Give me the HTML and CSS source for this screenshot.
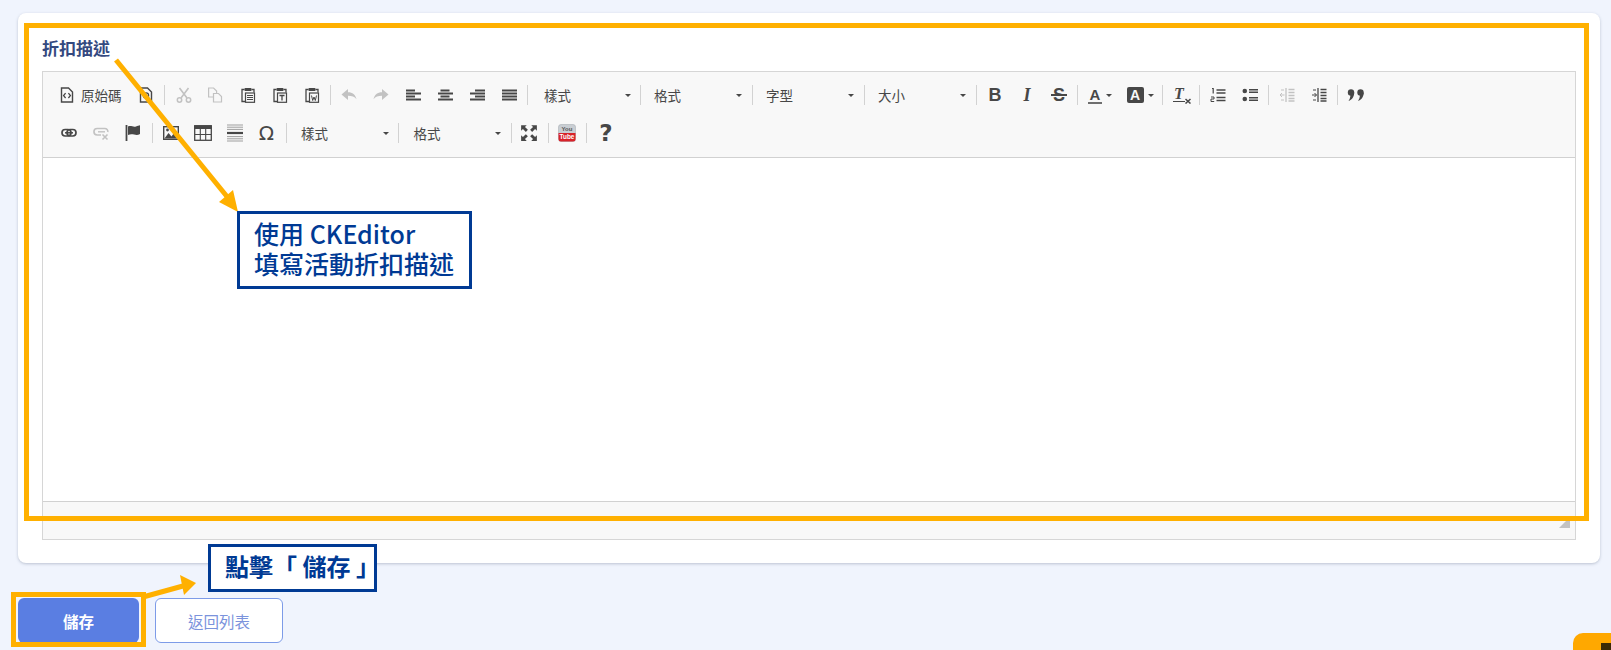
FILE: index.html
```html
<!DOCTYPE html>
<html lang="zh-Hant">
<head>
<meta charset="utf-8">
<title>折扣描述</title>
<link rel="stylesheet" href="styles.css">
</head>
<body>
<svg class="sprite" xmlns="http://www.w3.org/2000/svg">
  <symbol id="i-source" viewBox="0 0 16 16"><path d="M2.500 1h7L13.500 5v10h-11z" fill="none" stroke="currentColor" stroke-width="1.400"/><path d="M6.600 6.200 4.600 8.600l2 2.400M9.400 6.200l2 2.400-2 2.400" fill="none" stroke="currentColor" stroke-width="1.300"/></symbol>
  <symbol id="i-preview" viewBox="0 0 16 16"><path d="M2.500 1h7L13.500 5v10h-11z" fill="none" stroke="currentColor" stroke-width="1.400"/><circle cx="8" cy="8.500" r="2.600" fill="none" stroke="currentColor" stroke-width="1.300"/><path d="M10 10.500l3 3" stroke="currentColor" stroke-width="1.500"/></symbol>
  <symbol id="i-cut" viewBox="0 0 16 16"><circle cx="3.500" cy="13" r="2.200" fill="none" stroke="currentColor" stroke-width="1.500"/><circle cx="12.500" cy="13" r="2.200" fill="none" stroke="currentColor" stroke-width="1.500"/><path d="M5 11 12.500 1M11 11 3.500 1" stroke="currentColor" stroke-width="1.600"/></symbol>
  <symbol id="i-copy" viewBox="0 0 16 16"><path d="M.6 1h5l3 3v6h-8z" fill="none" stroke="currentColor" stroke-width="1.200"/><path d="M5.500 6.500h5l3 3v5.500h-8z" fill="#f8f8f8" stroke="currentColor" stroke-width="1.200"/></symbol>
  <symbol id="i-paste" viewBox="0 0 16 16"><path d="M4.500 2.500H2v12h3" fill="none" stroke="currentColor" stroke-width="1.300"/><path d="M11.500 2.500H14v3" fill="none" stroke="currentColor" stroke-width="1.300"/><rect x="4.500" y="1" width="7" height="3" rx=".8" fill="currentColor"/><rect x="5.500" y="6" width="9" height="9.300" fill="#f8f8f8" stroke="currentColor" stroke-width="1.200"/><path d="M7 8.500h6M7 10.500h6M7 12.500h6" stroke="currentColor" stroke-width="1.100"/></symbol>
  <symbol id="i-paste-t" viewBox="0 0 16 16"><path d="M4.500 2.500H2v12h3" fill="none" stroke="currentColor" stroke-width="1.300"/><path d="M11.500 2.500H14v3" fill="none" stroke="currentColor" stroke-width="1.300"/><rect x="4.500" y="1" width="7" height="3" rx=".8" fill="currentColor"/><rect x="5.500" y="6" width="9" height="9.300" fill="#f8f8f8" stroke="currentColor" stroke-width="1.200"/><path d="M7.500 8.500h5M10 8.500v5" stroke="currentColor" stroke-width="1.300"/></symbol>
  <symbol id="i-paste-w" viewBox="0 0 16 16"><path d="M4.500 2.500H2v12h3" fill="none" stroke="currentColor" stroke-width="1.300"/><path d="M11.500 2.500H14v3" fill="none" stroke="currentColor" stroke-width="1.300"/><rect x="4.500" y="1" width="7" height="3" rx=".8" fill="currentColor"/><rect x="5.500" y="6" width="9" height="9.300" fill="#f8f8f8" stroke="currentColor" stroke-width="1.200"/><path d="M7.500 8.500l1.200 5 1.300-3.500 1.300 3.500 1.200-5" fill="none" stroke="currentColor" stroke-width="1"/></symbol>
  <symbol id="i-undo" viewBox="0 0 16 16"><path d="M.5 7.500 7 2v3.300c4.500 0 7.500 2.500 8.500 7-2-2.600-4.500-3.500-8.500-3.500V13z" fill="currentColor"/></symbol>
  <symbol id="i-redo" viewBox="0 0 16 16"><path d="M15.500 7.500 9 2v3.300c-4.500 0-7.500 2.500-8.500 7 2-2.600 4.500-3.500 8.500-3.500V13z" fill="currentColor"/></symbol>
  <symbol id="i-al" viewBox="0 0 16 16"><path d="M1 3.500h9M1 6.500h15M1 9.500h9M1 12.500h15" stroke="currentColor" stroke-width="1.800"/></symbol>
  <symbol id="i-ac" viewBox="0 0 16 16"><path d="M3.500 3.500h9M1 6.500h15M3.500 9.500h9M1 12.500h15" stroke="currentColor" stroke-width="1.800"/></symbol>
  <symbol id="i-ar" viewBox="0 0 16 16"><path d="M6 3.500h10M1 6.500h15M6 9.500h10M1 12.500h15" stroke="currentColor" stroke-width="1.800"/></symbol>
  <symbol id="i-aj" viewBox="0 0 16 16"><path d="M1 3.500h15M1 6.500h15M1 9.500h15M1 12.500h15" stroke="currentColor" stroke-width="1.800"/></symbol>
  <symbol id="i-ol" viewBox="0 0 16 16"><path d="M6.500 3h9M6.500 6h9M6.500 10.500h9M6.500 13.500h9" stroke="currentColor" stroke-width="1.500"/><path d="M2 1.500h1.200v5" fill="none" stroke="currentColor" stroke-width="1.200"/><path d="M1 10h3v2H1v2.500h3.200" fill="none" stroke="currentColor" stroke-width="1"/></symbol>
  <symbol id="i-ul" viewBox="0 0 16 16"><circle cx="2.800" cy="4" r="2.300" fill="currentColor"/><circle cx="2.800" cy="12" r="2.300" fill="currentColor"/><path d="M7 2.800h9M7 5.300h9M7 10.800h9M7 13.300h9" stroke="currentColor" stroke-width="1.400"/></symbol>
  <symbol id="i-outdent" viewBox="0 0 16 16"><path d="M7 1v14" stroke="currentColor" stroke-width="1.300"/><path d="M9.500 2.500h6M9.500 5.500h6M9.500 8.500h6M9.500 11.500h6M9.500 14h6" stroke="currentColor" stroke-width="1.300"/><path d="M5.500 8H1M3 6 1 8l2 2M2 3h3M2 13h3" fill="none" stroke="currentColor" stroke-width="1"/></symbol>
  <symbol id="i-indent" viewBox="0 0 16 16"><path d="M7 1v14" stroke="currentColor" stroke-width="1.300"/><path d="M9.500 2.500h6M9.500 5.500h6M9.500 8.500h6M9.500 11.500h6M9.500 14h6" stroke="currentColor" stroke-width="1.300"/><path d="M1 8h4.500M3.500 6l2 2-2 2M2 3h3M2 13h3" fill="none" stroke="currentColor" stroke-width="1"/></symbol>
  <symbol id="i-quote" viewBox="0 0 18 16"><circle cx="4" cy="5.500" r="3.200" fill="currentColor"/><circle cx="13.500" cy="5.500" r="3.200" fill="currentColor"/><path d="M7.200 5.500C7.200 9.500 5 13 1.500 14c1-1.500 1.900-3.500 1.900-6M16.700 5.500c0 4-2.200 7.500-5.700 8.500 1-1.500 1.900-3.500 1.900-6" fill="currentColor"/></symbol>
  <symbol id="i-link" viewBox="0 0 16 16"><rect x="1" y="4.500" width="9" height="6.500" rx="3.200" fill="none" stroke="currentColor" stroke-width="1.700"/><rect x="6" y="4.500" width="9" height="6.500" rx="3.200" fill="none" stroke="currentColor" stroke-width="1.700"/><path d="M4 7.800h8" stroke="currentColor" stroke-width="1.500"/></symbol>
  <symbol id="i-unlink" viewBox="0 0 16 16"><path d="M8 10H4.200a3 3 0 0 1 0-6.500h7.600A3 3 0 0 1 14.800 7" fill="none" stroke="currentColor" stroke-width="1.600"/><path d="M5 6.800h7" stroke="currentColor" stroke-width="1.400"/><path d="M9.500 9.500l5 5M14.500 9.500l-5 5" stroke="currentColor" stroke-width="1.600"/></symbol>
  <symbol id="i-flag" viewBox="0 0 16 16"><path d="M1.500 0v16" stroke="currentColor" stroke-width="1.800"/><path d="M3 1.500c3-1.500 5 1 8 0 1.500-.4 3-1 4-1.200V9c-4 2.500-7-1-12 1z" fill="currentColor"/></symbol>
  <symbol id="i-image" viewBox="0 0 16 16"><rect x=".7" y="1.700" width="14.600" height="12.600" fill="none" stroke="currentColor" stroke-width="1.400"/><path d="M1.500 13.500 5.500 8l3 3.500 3.500-5 3 4v3z" fill="currentColor"/><circle cx="4.500" cy="5" r="1.400" fill="currentColor"/></symbol>
  <symbol id="i-table" viewBox="0 0 18 18"><rect x=".7" y="1.700" width="16.600" height="14.600" fill="none" stroke="currentColor" stroke-width="1.300"/><path d="M0 2h18v3H0z" fill="currentColor"/><path d="M6.300 5v11M11.700 5v11M1 10.500h16" stroke="currentColor" stroke-width="1.100"/></symbol>
  <symbol id="i-hr" viewBox="0 0 18 18"><path d="M1 1h16M1 3.200h16M1 5.400h16M1 12.600h16M1 14.800h16M1 17h16" stroke="currentColor" stroke-width="1" opacity=".5"/><path d="M1 9h16" stroke="currentColor" stroke-width="2.200"/></symbol>
  <symbol id="i-max" viewBox="0 0 16 16"><path d="M1 1h5L4.400 2.600 7 5.200 5.200 7 2.600 4.400 1 6zM15 1v5l-1.600-1.600L10.800 7 9 5.200l2.600-2.600L10 1zM1 15v-5l1.600 1.600L5.200 9 7 10.800l-2.600 2.600L6 15zM15 15h-5l1.600-1.600L9 10.800 10.800 9l2.600 2.600L15 10z" fill="currentColor"/></symbol>
  <symbol id="i-clear" viewBox="0 0 16 16"><path d="M10.500 11l5 4.500M15.500 11l-5 4.500" stroke="currentColor" stroke-width="1.500"/></symbol>
</svg>

<main class="page">
  <section class="card">
    <h2 class="field-label">折扣描述</h2>
    <div class="editor">
      <div class="toolbar">
        <div class="row">
          <button class="btn btn-source"><svg class="ic"><use href="#i-source"/></svg><span class="btn-text">原始碼</span></button>
          <button class="btn"><svg class="ic"><use href="#i-preview"/></svg></button>
          <i class="sep sep-first"></i>
          <button class="btn off"><svg class="ic"><use href="#i-cut"/></svg></button>
          <button class="btn off"><svg class="ic"><use href="#i-copy"/></svg></button>
          <button class="btn"><svg class="ic"><use href="#i-paste"/></svg></button>
          <button class="btn"><svg class="ic"><use href="#i-paste-t"/></svg></button>
          <button class="btn"><svg class="ic"><use href="#i-paste-w"/></svg></button>
          <i class="sep"></i>
          <button class="btn off"><svg class="ic"><use href="#i-undo"/></svg></button>
          <button class="btn off"><svg class="ic"><use href="#i-redo"/></svg></button>
          <button class="btn"><svg class="ic"><use href="#i-al"/></svg></button>
          <button class="btn"><svg class="ic"><use href="#i-ac"/></svg></button>
          <button class="btn"><svg class="ic"><use href="#i-ar"/></svg></button>
          <button class="btn"><svg class="ic"><use href="#i-aj"/></svg></button>
          <i class="sep"></i>
          <div class="combo combo-first"><span>樣式</span><b class="caret"></b></div>
          <i class="sep"></i>
          <div class="combo"><span>格式</span><b class="caret"></b></div>
          <i class="sep"></i>
          <div class="combo"><span>字型</span><b class="caret"></b></div>
          <i class="sep"></i>
          <div class="combo"><span>大小</span><b class="caret"></b></div>
          <i class="sep"></i>
          <button class="btn glyph glyph-b">B</button>
          <button class="btn glyph glyph-i">I</button>
          <button class="btn glyph glyph-s"><span class="strike">S</span></button>
          <i class="sep"></i>
          <button class="btn btn-color"><span class="glyph-a">A</span><b class="caret caret-sm"></b></button>
          <button class="btn btn-color"><span class="glyph-abg">A</span><b class="caret caret-sm"></b></button>
          <i class="sep"></i>
          <button class="btn"><span class="glyph-clear"><span class="glyph-clear-i">T</span><svg class="ic"><use href="#i-clear"/></svg></span></button>
          <i class="sep"></i>
          <button class="btn"><svg class="ic"><use href="#i-ol"/></svg></button>
          <button class="btn"><svg class="ic"><use href="#i-ul"/></svg></button>
          <i class="sep"></i>
          <button class="btn off"><svg class="ic"><use href="#i-outdent"/></svg></button>
          <button class="btn"><svg class="ic"><use href="#i-indent"/></svg></button>
          <i class="sep"></i>
          <button class="btn"><svg class="ic ic-lg"><use href="#i-quote"/></svg></button>
        </div>
        <div class="row row-second">
          <button class="btn"><svg class="ic"><use href="#i-link"/></svg></button>
          <button class="btn off"><svg class="ic"><use href="#i-unlink"/></svg></button>
          <button class="btn"><svg class="ic"><use href="#i-flag"/></svg></button>
          <i class="sep"></i>
          <button class="btn"><svg class="ic"><use href="#i-image"/></svg></button>
          <button class="btn"><svg class="ic ic-lg"><use href="#i-table"/></svg></button>
          <button class="btn"><svg class="ic ic-lg"><use href="#i-hr"/></svg></button>
          <button class="btn glyph glyph-omega">Ω</button>
          <i class="sep"></i>
          <div class="combo"><span>樣式</span><b class="caret"></b></div>
          <i class="sep"></i>
          <div class="combo"><span>格式</span><b class="caret"></b></div>
          <i class="sep"></i>
          <button class="btn"><svg class="ic ic-lg"><use href="#i-max"/></svg></button>
          <i class="sep"></i>
          <button class="btn">
            <svg class="ic ic-lg" viewBox="0 0 18 18">
              <rect x=".5" y=".5" width="17" height="17" rx="2.500" fill="#c9ced3" stroke="#aab0b5" stroke-width=".6"/>
              <path d="M.5 9h17v6a2.500 2.500 0 0 1-2.500 2.500H3A2.500 2.500 0 0 1 .5 15z" fill="#d8232a"/>
              <text x="9" y="7.200" class="yt-you">You</text>
              <text x="9" y="15" class="yt-tube">Tube</text>
            </svg>
          </button>
          <i class="sep"></i>
          <button class="btn glyph glyph-help">?</button>
        </div>
      </div>
      <div class="content"></div>
      <div class="statusbar"><b class="resizer"></b></div>
    </div>
  </section>
  <div class="actions">
    <button class="action action-save">儲存</button>
    <button class="action action-back">返回列表</button>
  </div>
</main>

<div class="mark mark-editor"></div>
<div class="mark mark-save"></div>
<svg class="arrows" viewBox="0 0 1611 650" xmlns="http://www.w3.org/2000/svg">
  <path d="M116 60 229 199" class="arrow-line"/>
  <path d="M238 212 219 202 233 190z" class="arrow-head"/>
  <path d="M143 597 183 586" class="arrow-line"/>
  <path d="M196 583 180 575 184 595z" class="arrow-head"/>
</svg>
<div class="callout callout-editor">使用 CKEditor<br>填寫活動折扣描述</div>
<div class="callout callout-save">點擊「 儲存 」</div>
<div class="chat-tab"><i class="chat-dot"></i></div>
</body>
</html>
```

FILE: styles.css
```css
* { box-sizing: border-box; }
html, body { margin: 0; height: 650px; overflow: hidden; }
body {
  position: relative;
  background: #f0f4fd;
  font-family: "Noto Sans CJK TC", "Noto Sans", sans-serif;
  color: #474747;
}
.sprite { position: absolute; width: 0; height: 0; }

.page { padding: 13px 11px 0 18px; }
.card {
  height: 550px;
  padding: 23px 24px 24px;
  background: #fff;
  border-radius: 8px;
  box-shadow: 0 1px 3px rgba(90, 100, 130, .35);
}
.field-label {
  margin: 0 0 11px;
  height: 24px;
  font-size: 17px;
  line-height: 24px;
  font-weight: 700;
  color: #34497f;
}
.editor {
  height: 469px;
  display: flex;
  flex-direction: column;
  border: 1px solid #d6d6d6;
  background: #fff;
}
.toolbar {
  height: 86px;
  padding: 4px 0 0 10px;
  background: #f8f8f8;
  border-bottom: 1px solid #d1d1d1;
}
.row { display: flex; align-items: center; height: 38px; }
.btn {
  flex: none;
  width: 32px;
  height: 30px;
  padding: 0;
  display: flex;
  align-items: center;
  justify-content: center;
  border: 0;
  background: none;
  color: #474747;
  font-family: inherit;
}
.btn.off { color: #c2c2c2; }
.btn-source { width: 77px; justify-content: flex-start; padding-left: 6px; gap: 6px; }
.btn-text { font-size: 13.5px; line-height: 18px; white-space: nowrap; }
.btn-color { width: 40px; gap: 4px; }
.ic { width: 16px; height: 16px; flex: none; }
.ic-lg { width: 18px; height: 18px; }
.yt-you { font: 700 6px "Liberation Sans", sans-serif; fill: #555; text-anchor: middle; }
.yt-tube { font: 700 6.400px "Liberation Sans", sans-serif; fill: #fff; text-anchor: middle; }
.sep {
  flex: none;
  width: 1px;
  height: 20px;
  margin: 0 2px;
  background: #d2d2d2;
}
.sep-first { margin-right: 3px; }
.row-second .sep { margin: 0 1.500px 0 3px; }
.combo {
  flex: none;
  width: 107px;
  height: 30px;
  padding: 0 8.500px 0 11px;
  display: flex;
  align-items: center;
  justify-content: space-between;
  font-size: 13.5px;
}
.combo-first { width: 108px; padding-left: 14px; padding-right: 7px; }
.row-second .combo { padding: 0 6.500px 0 13px; }
.caret {
  width: 0;
  height: 0;
  border: 3.500px solid transparent;
  border-top: 3.500px solid #474747;
  border-bottom: 0;
}
.caret-sm { border-width: 3px 3px 0; }
.glyph { font-family: "Liberation Sans", sans-serif; line-height: 1; }
.glyph-b { font-size: 18px; font-weight: 700; }
.glyph-i { font: italic 700 18px "Liberation Serif", serif; }
.glyph-s { font-size: 18px; font-weight: 700; }
.strike { position: relative; display: block; }
.strike::after {
  content: "";
  position: absolute;
  left: -2px;
  right: -2px;
  top: 8px;
  height: 2px;
  background: #474747;
  box-shadow: 0 1px 0 #f8f8f8;
}
.glyph-omega { font-family: "DejaVu Sans", sans-serif; font-size: 20px; }
.glyph-help { width: 36px; font-family: "DejaVu Sans", sans-serif; font-size: 23px; font-weight: 700; }
.glyph-a {
  font: 700 15px/15px "Liberation Sans", sans-serif;
  border-bottom: 2px solid #6e6e6e;
  padding: 0 2px;
}
.glyph-abg {
  width: 17px;
  height: 16px;
  border-radius: 2px;
  background: #474747;
  color: #f8f8f8;
  font: 700 14px/16px "Liberation Sans", sans-serif;
  text-align: center;
}
.glyph-clear { position: relative; display: block; width: 16px; height: 18px; }
.glyph-clear-i {
  display: block;
  width: 12px;
  font: italic 700 16px/15px "Liberation Serif", serif;
  border-bottom: 1.500px solid #474747;
  text-align: center;
}
.glyph-clear .ic { position: absolute; left: 2px; top: 2px; }

.content { flex: 1; background: #fff; }
.statusbar {
  position: relative;
  height: 38px;
  background: #f8f8f8;
  border-top: 1px solid #d1d1d1;
}
.resizer {
  position: absolute;
  right: 5px;
  bottom: 11px;
  width: 0;
  height: 0;
  border-style: solid;
  border-width: 0 0 11px 11px;
  border-color: transparent transparent #c2c2c2;
}

.actions { display: flex; gap: 16px; margin-top: 35px; }
.action {
  height: 45px;
  border-radius: 6px;
  font-family: inherit;
  font-size: 15.5px;
}
.action-save {
  width: 121px;
  background: #5a7ee2;
  border: 0;
  color: #fff;
  font-weight: 700;
}
.action-back {
  width: 128px;
  background: #fff;
  border: 1px solid #7d9be8;
  color: #7b93dc;
}

.mark { position: absolute; border: 5px solid #ffb000; }
.mark-editor { left: 24px; top: 23px; width: 1565px; height: 498px; }
.mark-save { left: 11px; top: 592px; width: 135px; height: 55px; }
.arrows { position: absolute; left: 0; top: 0; width: 1611px; height: 650px; pointer-events: none; }
.arrow-line { fill: none; stroke: #ffb000; stroke-width: 5; }
.arrow-head { fill: #ffb000; }
.callout {
  position: absolute;
  background: #fff;
  border: 3px solid #003a94;
  color: #003a94;
  font-weight: 500;
  white-space: nowrap;
}
.callout-editor {
  left: 237px;
  top: 211px;
  width: 235px;
  height: 78px;
  padding: 4px 0 0 14px;
  font-size: 25px;
  line-height: 30px;
}
.callout-save {
  left: 208px;
  top: 544px;
  width: 169px;
  height: 48px;
  padding: 0 0 0 14px;
  font-size: 24px;
  font-weight: 700;
  line-height: 38px;
}
.chat-tab {
  position: absolute;
  left: 1573px;
  top: 633px;
  width: 38px;
  height: 17px;
  background: #ffa800;
  border-radius: 10px 0 0 0;
}
.chat-dot {
  position: absolute;
  left: 28px;
  top: 10px;
  width: 10px;
  height: 7px;
  background: #3a2a05;
}
```
